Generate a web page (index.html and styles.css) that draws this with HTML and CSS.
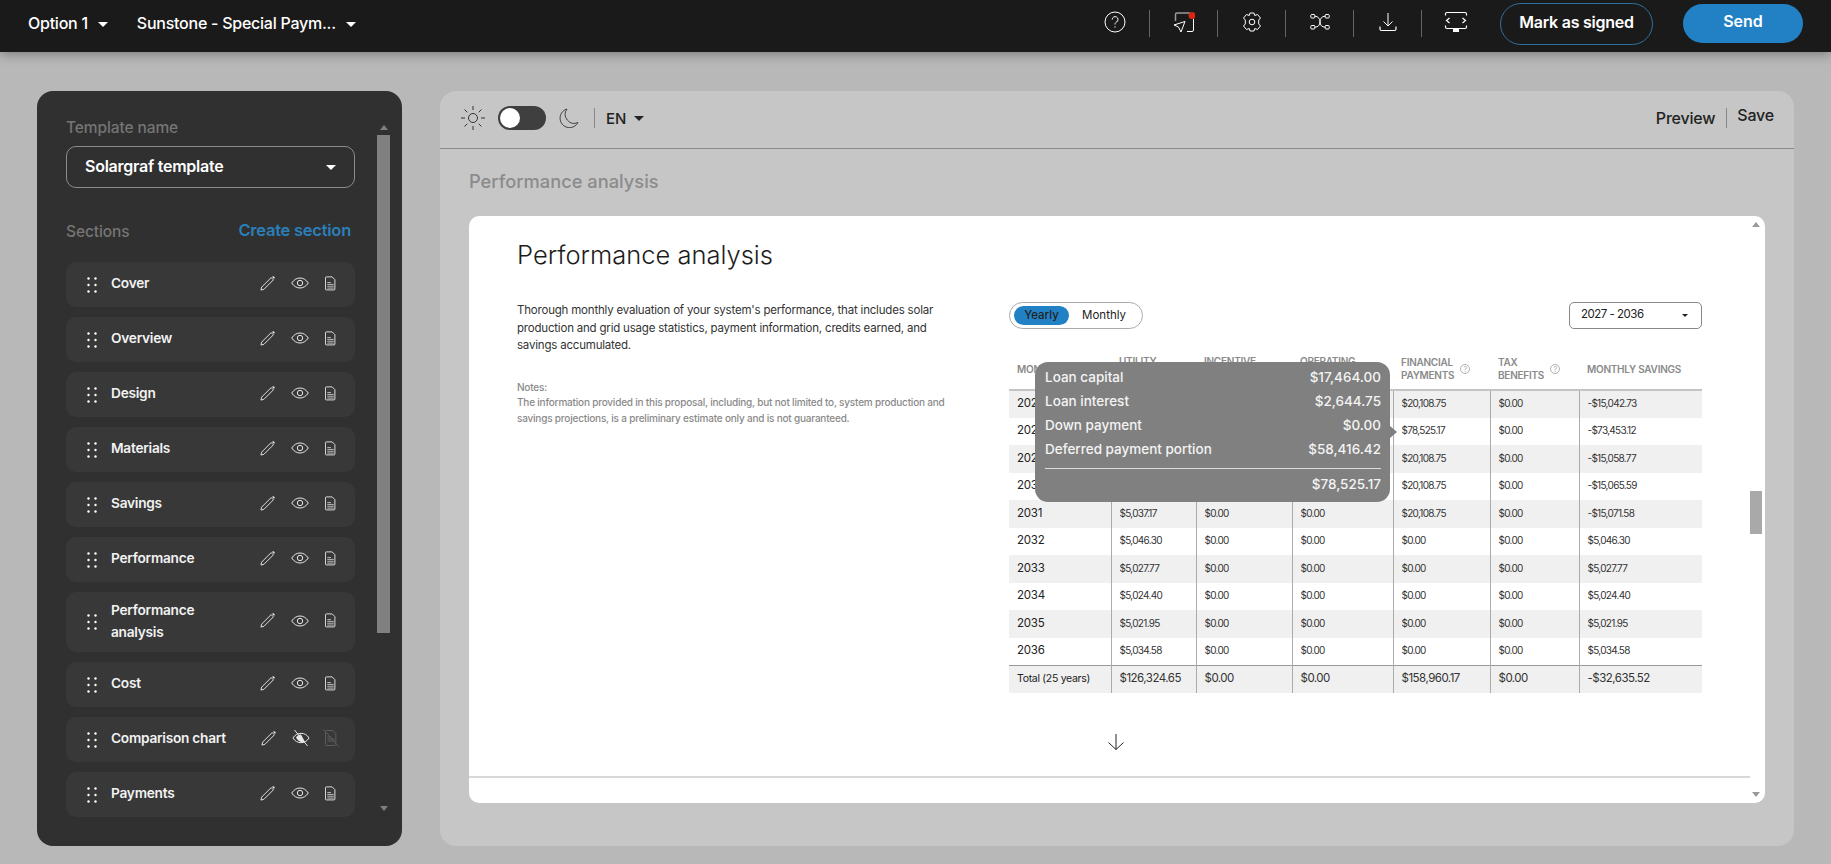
FILE: index.html
```html
<!DOCTYPE html>
<html lang="en">
<head>
  <meta charset="UTF-8">
  <title>Proposal template editor</title>
  <link rel="stylesheet" href="styles.css">
</head>
<body>

  <svg class="icon-defs" width="0" height="0">
    <symbol id="i-drag" viewBox="0 0 10 16"><g fill="#fff"><circle cx="1.5" cy="1.500" r="1.200"/><circle cx="8.5" cy="1.500" r="1.200"/><circle cx="1.5" cy="8" r="1.200"/><circle cx="8.5" cy="8" r="1.200"/><circle cx="1.5" cy="14.500" r="1.200"/><circle cx="8.5" cy="14.500" r="1.200"/></g></symbol>
    <symbol id="i-pencil" viewBox="0 0 16 16"><path d="M1 15l.8-3.200L11.900 1.700l2.400 2.400L4.200 14.200 1 15z" fill="none" stroke="currentColor"/><path d="M12.700.9l2.400 2.400 .6-1.900-1.100-1.100z" fill="currentColor"/></symbol>
    <symbol id="i-eye" viewBox="0 0 18 12"><path d="M.7 6C3 2.600 5.800 1 9 1s6 1.600 8.300 5C15 9.400 12.200 11 9 11S3 9.400.7 6z" fill="none" stroke="currentColor"/><circle cx="9" cy="6" r="2.700" fill="none" stroke="currentColor"/></symbol>
    <symbol id="i-eye-off" viewBox="0 0 18 18"><path d="M.9 9C3 5.800 5.800 4.300 9 4.300s6 1.500 8.100 4.700C15 12.200 12.200 13.700 9 13.700S3 12.200.9 9z" fill="none" stroke="currentColor"/><path d="M4 8.500c1-2 3-3 5-3l4 7.500c-3 1-6.500 0-9-4.500z" fill="currentColor"/><path d="M2.500 1l13 16" stroke="currentColor"/></symbol>
    <symbol id="i-doc" viewBox="0 0 12 16"><path d="M1.500.8h6.300l3 3v10.200a1 1 0 0 1-1 1H1.500a1 1 0 0 1-1-1V1.800a1 1 0 0 1 1-1z" fill="none" stroke="currentColor"/><path d="M2.500 7h4M2.500 9h7M2.500 11h7M2.500 13h7" stroke="currentColor" opacity=".8"/></symbol>
    <symbol id="i-doc-off" viewBox="0 0 16 18"><path d="M3.500 1.500h6.300l3 3v11a1 1 0 0 1-1 1H3.500a1 1 0 0 1-1-1v-13a1 1 0 0 1 1-1z" fill="none" stroke="currentColor"/><path d="M4.500 8h4M4.500 10h7M4.500 12h7M.5.500l15 17" stroke="currentColor"/></symbol>
  </svg>

  <header class="topbar">
    <div class="topbar-left">
      <button class="top-select">Option 1 <span class="caret"></span></button>
      <button class="top-select">Sunstone - Special Paym... <span class="caret"></span></button>
    </div>
    <div class="topbar-right">
      <div class="tool-icons">
        <span class="tool">
          <svg width="22" height="22" viewBox="0 0 22 22" fill="none" stroke="#fff"><circle cx="11" cy="11" r="10"/><path d="M8.200 8.500a2.900 2.900 0 1 1 4.400 2.500c-1 .6-1.600 1.200-1.600 2.500M11 15.300v1.300"/></svg>
        </span>
        <span class="tool">
          <svg width="22" height="22" viewBox="0 0 22 22" fill="none" stroke="#fff"><path d="M2.500 10V3.500a1.500 1.500 0 0 1 1.500-1.500h13" stroke="#9a9a9a" stroke-width="1.500"/><path d="M20.500 8v11a1.500 1.500 0 0 1-1.500 1.500h-5"/><path d="M12 10.500L1 14l4.500 2 2.500 5 4-10.500z"/><circle cx="19" cy="4.500" r="3.500" fill="#d8260f" stroke="none"/></svg>
        </span>
        <span class="tool">
          <svg width="20" height="20" viewBox="0 0 20 20" fill="none" stroke="#fff" stroke-linejoin="round"><path d="M8 1h4l.7 2.500 2.800-1 3 3.500-1.800 2v4l1.800 2-3 3.500-2.800-1L12 19H8l-.7-2.500-2.800 1-3-3.500 1.800-2V8L1.500 6l3-3.500 2.800 1L8 1z"/><circle cx="10" cy="10" r="2.800"/></svg>
        </span>
        <span class="tool">
          <svg width="20" height="18" viewBox="0 0 20 18" fill="none" stroke="#fff"><rect x=".8" y="1.500" width="4" height="3.500" rx=".8"/><rect x="15.200" y="1.500" width="4" height="3.500" rx=".8"/><rect x=".8" y="12.500" width="4" height="3.500" rx=".8"/><rect x="15.200" y="12.500" width="4" height="3.500" rx=".8"/><path d="M4.800 3.200C8 3.200 10 5.500 10 8.800S8 14.200 4.800 14.200M15.200 3.200C12 3.200 10 5.500 10 8.800s2 5.400 5.200 5.400"/></svg>
        </span>
        <span class="tool">
          <svg width="18" height="20" viewBox="0 0 18 20" fill="none" stroke="#fff"><path d="M9 1v13M4.500 9.500L9 14l4.500-4.500"/><path d="M1 14.500v2.500a1.500 1.500 0 0 0 1.500 1.500h13a1.500 1.500 0 0 0 1.500-1.500v-2.500" stroke-width="1.200"/></svg>
        </span>
        <span class="tool">
          <svg width="24" height="22" viewBox="0 0 24 22" fill="none" stroke="#fff" stroke-width="1.200"><path d="M1.500 4.500V3A1.500 1.500 0 0 1 3 1.500h18A1.500 1.500 0 0 1 22.500 3v1.500M1.500 14.500V16A1.500 1.500 0 0 0 3 17.500h18a1.500 1.500 0 0 0 1.500-1.500v-1.500M5.500 7L2.500 9.500l3 2.500M18.500 7l3 2.500-3 2.500"/><rect x="9" y="18" width="6" height="3" fill="#fff" stroke="none"/></svg>
        </span>
      </div>
      <button class="btn-outline">Mark as signed</button>
      <button class="btn-send">Send</button>
    </div>
  </header>

  <main class="workspace">

    <aside class="side-panel">
      <div class="side-content">
        <div class="side-label">Template name</div>
        <button class="template-select">Solargraf template <span class="caret"></span></button>

        <div class="sections-head">
          <span class="side-label">Sections</span>
          <a class="create-link" href="#">Create section</a>
        </div>

        <ul class="section-list">
          <li class="section-row">
            <svg class="drag" width="10" height="16"><use href="#i-drag"/></svg>
            <span class="section-name">Cover</span>
            <svg class="act" width="15" height="15"><use href="#i-pencil"/></svg>
            <svg class="act" width="18" height="12"><use href="#i-eye"/></svg>
            <svg class="act" width="11" height="15"><use href="#i-doc"/></svg>
          </li>
          <li class="section-row">
            <svg class="drag" width="10" height="16"><use href="#i-drag"/></svg>
            <span class="section-name">Overview</span>
            <svg class="act" width="15" height="15"><use href="#i-pencil"/></svg>
            <svg class="act" width="18" height="12"><use href="#i-eye"/></svg>
            <svg class="act" width="11" height="15"><use href="#i-doc"/></svg>
          </li>
          <li class="section-row">
            <svg class="drag" width="10" height="16"><use href="#i-drag"/></svg>
            <span class="section-name">Design</span>
            <svg class="act" width="15" height="15"><use href="#i-pencil"/></svg>
            <svg class="act" width="18" height="12"><use href="#i-eye"/></svg>
            <svg class="act" width="11" height="15"><use href="#i-doc"/></svg>
          </li>
          <li class="section-row">
            <svg class="drag" width="10" height="16"><use href="#i-drag"/></svg>
            <span class="section-name">Materials</span>
            <svg class="act" width="15" height="15"><use href="#i-pencil"/></svg>
            <svg class="act" width="18" height="12"><use href="#i-eye"/></svg>
            <svg class="act" width="11" height="15"><use href="#i-doc"/></svg>
          </li>
          <li class="section-row">
            <svg class="drag" width="10" height="16"><use href="#i-drag"/></svg>
            <span class="section-name">Savings</span>
            <svg class="act" width="15" height="15"><use href="#i-pencil"/></svg>
            <svg class="act" width="18" height="12"><use href="#i-eye"/></svg>
            <svg class="act" width="11" height="15"><use href="#i-doc"/></svg>
          </li>
          <li class="section-row">
            <svg class="drag" width="10" height="16"><use href="#i-drag"/></svg>
            <span class="section-name">Performance</span>
            <svg class="act" width="15" height="15"><use href="#i-pencil"/></svg>
            <svg class="act" width="18" height="12"><use href="#i-eye"/></svg>
            <svg class="act" width="11" height="15"><use href="#i-doc"/></svg>
          </li>
          <li class="section-row section-row-tall">
            <svg class="drag" width="10" height="16"><use href="#i-drag"/></svg>
            <span class="section-name">Performance analysis</span>
            <svg class="act" width="15" height="15"><use href="#i-pencil"/></svg>
            <svg class="act" width="18" height="12"><use href="#i-eye"/></svg>
            <svg class="act" width="11" height="15"><use href="#i-doc"/></svg>
          </li>
          <li class="section-row">
            <svg class="drag" width="10" height="16"><use href="#i-drag"/></svg>
            <span class="section-name">Cost</span>
            <svg class="act" width="15" height="15"><use href="#i-pencil"/></svg>
            <svg class="act" width="18" height="12"><use href="#i-eye"/></svg>
            <svg class="act" width="11" height="15"><use href="#i-doc"/></svg>
          </li>
          <li class="section-row">
            <svg class="drag" width="10" height="16"><use href="#i-drag"/></svg>
            <span class="section-name">Comparison chart</span>
            <svg class="act" width="15" height="15"><use href="#i-pencil"/></svg>
            <svg class="act" width="18" height="18"><use href="#i-eye-off"/></svg>
            <svg class="act act-off" width="16" height="18"><use href="#i-doc-off"/></svg>
          </li>
          <li class="section-row">
            <svg class="drag" width="10" height="16"><use href="#i-drag"/></svg>
            <span class="section-name">Payments</span>
            <svg class="act" width="15" height="15"><use href="#i-pencil"/></svg>
            <svg class="act" width="18" height="12"><use href="#i-eye"/></svg>
            <svg class="act" width="11" height="15"><use href="#i-doc"/></svg>
          </li>
        </ul>
      </div>
      <div class="side-scroll">
        <span class="arrow-up"></span>
        <div class="side-thumb"></div>
        <span class="arrow-down"></span>
      </div>
    </aside>

    <section class="editor">
      <div class="editor-head">
        <div class="head-left">
          <svg width="26" height="26" viewBox="0 0 26 26" fill="none" stroke="#333"><circle cx="13" cy="13" r="4.500"/><path d="M13 1v4M13 21v4M1 13h4M21 13h4M4.500 4.500l2.800 2.800M18.700 18.700l2.800 2.800M4.500 21.500l2.800-2.800M18.700 7.300l2.800-2.800"/></svg>
          <span class="mode-switch"><span class="mode-knob"></span></span>
          <svg class="moon" width="20" height="20" viewBox="0 0 20 20" fill="none" stroke="#444"><path d="M8 1A9.500 9.500 0 1 0 19 14.500 9 9 0 0 1 8 1z"/></svg>
          <span class="lang">EN <span class="caret caret-dark"></span></span>
        </div>
        <div class="head-right">
          <a class="head-link" href="#">Preview</a>
          <a class="head-link head-link-save" href="#">Save</a>
        </div>
      </div>

      <h2 class="editor-title">Performance analysis</h2>

      <div class="page-card">
        <div class="page-content">
          <h1 class="page-title">Performance analysis</h1>

          <div class="page-columns">
            <div class="intro">
              <p class="intro-text">Thorough monthly evaluation of your system's performance, that includes solar production and grid usage statistics, payment information, credits earned, and savings accumulated.</p>
              <p class="intro-notes">Notes:<br>The information provided in this proposal, including, but not limited to, system production and savings projections, is a preliminary estimate only and is not guaranteed.</p>
            </div>

            <div class="analysis">
              <div class="analysis-controls">
                <div class="period-toggle">
                  <span class="period period-on">Yearly</span>
                  <span class="period">Monthly</span>
                </div>
                <div class="year-select">2027 - 2036 <span class="caret caret-small"></span></div>
              </div>

              <div class="table-wrap">
                <table class="perf-table">
                  <colgroup>
                    <col class="c1"><col class="c2"><col class="c3"><col class="c4"><col class="c5"><col class="c6"><col class="c7">
                  </colgroup>
                  <thead>
                    <tr>
                      <th>MON</th>
                      <th class="th-under">UTILITY</th>
                      <th class="th-under">INCENTIVE</th>
                      <th class="th-under">OPERATING</th>
                      <th><span class="th-flex"><span>FINANCIAL<br>PAYMENTS</span><span class="hint">?</span></span></th>
                      <th><span class="th-flex"><span>TAX<br>BENEFITS</span><span class="hint">?</span></span></th>
                      <th>MONTHLY SAVINGS</th>
                    </tr>
                  </thead>
                  <tbody>
                    <tr><td>202</td><td></td><td></td><td></td><td>$20,108.75</td><td>$0.00</td><td>-$15,042.73</td></tr>
                    <tr><td>202</td><td></td><td></td><td></td><td>$78,525.17</td><td>$0.00</td><td>-$73,453.12</td></tr>
                    <tr><td>202</td><td></td><td></td><td></td><td>$20,108.75</td><td>$0.00</td><td>-$15,058.77</td></tr>
                    <tr><td>203</td><td></td><td></td><td></td><td>$20,108.75</td><td>$0.00</td><td>-$15,065.59</td></tr>
                    <tr><td>2031</td><td>$5,037.17</td><td>$0.00</td><td>$0.00</td><td>$20,108.75</td><td>$0.00</td><td>-$15,071.58</td></tr>
                    <tr><td>2032</td><td>$5,046.30</td><td>$0.00</td><td>$0.00</td><td>$0.00</td><td>$0.00</td><td>$5,046.30</td></tr>
                    <tr><td>2033</td><td>$5,027.77</td><td>$0.00</td><td>$0.00</td><td>$0.00</td><td>$0.00</td><td>$5,027.77</td></tr>
                    <tr><td>2034</td><td>$5,024.40</td><td>$0.00</td><td>$0.00</td><td>$0.00</td><td>$0.00</td><td>$5,024.40</td></tr>
                    <tr><td>2035</td><td>$5,021.95</td><td>$0.00</td><td>$0.00</td><td>$0.00</td><td>$0.00</td><td>$5,021.95</td></tr>
                    <tr><td>2036</td><td>$5,034.58</td><td>$0.00</td><td>$0.00</td><td>$0.00</td><td>$0.00</td><td>$5,034.58</td></tr>
                    <tr class="total-row"><td>Total (25 years)</td><td>$126,324.65</td><td>$0.00</td><td>$0.00</td><td>$158,960.17</td><td>$0.00</td><td>-$32,635.52</td></tr>
                  </tbody>
                </table>

                <div class="tip">
                  <div class="tip-row"><span>Loan capital</span><span>$17,464.00</span></div>
                  <div class="tip-row"><span>Loan interest</span><span>$2,644.75</span></div>
                  <div class="tip-row"><span>Down payment</span><span>$0.00</span></div>
                  <div class="tip-row"><span>Deferred payment portion</span><span>$58,416.42</span></div>
                  <div class="tip-total">$78,525.17</div>
                </div>
              </div>
            </div>
          </div>

          <div class="next-arrow">
            <svg width="18" height="18" viewBox="0 0 18 18" fill="none" stroke="#222"><path d="M9 1v15.500M1.500 9.500L9 16.500l7.500-7"/></svg>
          </div>
          <div class="page-divider"></div>
        </div>

        <div class="card-scroll">
          <span class="arrow-up arrow-light"></span>
          <div class="card-thumb"></div>
          <span class="arrow-down arrow-light"></span>
        </div>
      </div>
    </section>
  </main>

</body>
</html>
```

FILE: styles.css
```css
* {
  box-sizing: border-box;
}

body {
  margin: 0;
  height: 864px;
  overflow: hidden;
  display: flex;
  flex-direction: column;
  background-color: #b8b8b8;
  font-family: 'Inter', 'Liberation Sans', sans-serif;
  color: #1a1a1a;
}

button {
  font-family: inherit;
  border: none;
  background: none;
  cursor: pointer;
}

a {
  text-decoration: none;
}

.icon-defs {
  position: absolute;
}

.caret {
  display: inline-block;
  width: 0;
  height: 0;
  border-left: 5px solid transparent;
  border-right: 5px solid transparent;
  border-top: 5px solid #fff;
  vertical-align: middle;
}

.caret-dark {
  border-top-color: #222;
  margin-left: 8px;
}

.caret-small {
  border-left-width: 3px;
  border-right-width: 3px;
  border-top: 3px solid #222;
  margin-top: 4px;
}

/* Top bar */
.topbar {
  height: 52px;
  flex: none;
  display: flex;
  justify-content: space-between;
  align-items: center;
  padding: 0 28px;
  background-color: #1a1a1a;
  box-shadow: 0 3px 10px rgba(0, 0, 0, 0.3);
}

.topbar-left {
  display: flex;
  gap: 29px;
  margin-top: -6px;
}

.top-select {
  padding: 0;
  color: #fff;
  font-size: 16px;
  font-weight: 500;
  letter-spacing: -0.25px;
}

.top-select .caret {
  margin-left: 6px;
}

.topbar-right {
  display: flex;
  align-items: center;
}

.tool-icons {
  display: flex;
  align-items: center;
  margin-right: 11px;
  margin-top: -5px;
}

.tool {
  width: 68px;
  height: 27px;
  display: flex;
  align-items: center;
  justify-content: center;
  border-left: 1px solid #666;
}

.tool svg {
  margin-top: -3px;
}

.tool:first-child {
  border-left: none;
}

.btn-outline {
  width: 153px;
  height: 42px;
  margin-top: -5px;
  padding-bottom: 4px;
  border: 1px solid #2d6f9b;
  border-radius: 21px;
  color: #fff;
  font-size: 16px;
  font-weight: 600;
  letter-spacing: -0.25px;
}

.btn-send {
  width: 120px;
  height: 39px;
  margin-left: 30px;
  margin-top: -5px;
  padding-bottom: 6px;
  border-radius: 20px;
  background-color: #2281c4;
  color: #fff;
  font-size: 16px;
  font-weight: 600;
}

/* Workspace */
.workspace {
  flex: 1;
  min-height: 0;
  display: flex;
  gap: 38px;
  padding: 39px 37px 18px;
}

.side-panel {
  width: 365px;
  flex: none;
  display: flex;
  gap: 22px;
  padding: 28px 12px 28px 29px;
  background-color: #303030;
  border-radius: 16px;
}

.side-content {
  width: 289px;
  flex: none;
}

.side-label {
  font-size: 15.5px;
  line-height: 18px;
  color: #757575;
  font-weight: 500;
  letter-spacing: -0.1px;
}

.template-select {
  width: 100%;
  height: 42px;
  margin-top: 9px;
  padding: 0 18px 3px;
  display: flex;
  align-items: center;
  justify-content: space-between;
  border: 1px solid #8c8c8c;
  border-radius: 10px;
  color: #fff;
  font-size: 16px;
  font-weight: 600;
  letter-spacing: -0.25px;
}

.template-select .caret {
  margin-top: 3px;
}

.sections-head {
  display: flex;
  justify-content: space-between;
  align-items: center;
  height: 20px;
  margin-top: 34px;
  padding-right: 4px;
}

.create-link {
  font-size: 16.5px;
  font-weight: 600;
  color: #2b7fb8;
  margin-top: -5px;
  letter-spacing: -0.25px;
}

.section-list {
  list-style: none;
  margin: 20px 0 0;
  padding: 0;
  display: flex;
  flex-direction: column;
  gap: 10px;
}

.section-row {
  height: 45px;
  display: flex;
  align-items: center;
  padding: 0 19px 0 21px;
  background-color: #383838;
  border-radius: 10px;
  color: #e8e8e8;
}

.section-row-tall {
  height: 60px;
}

.drag {
  flex: none;
  margin-right: 14px;
}

.section-name {
  width: 128px;
  margin-right: auto;
  padding-bottom: 3px;
  font-size: 13.7px;
  font-weight: 600;
  line-height: 22px;
  color: #f2f2f2;
  letter-spacing: -0.25px;
}

.act {
  flex: none;
  margin-left: 16px;
  margin-top: -3px;
}

.act-off {
  color: #5c5c5c;
  margin-left: 13px;
  margin-right: -3px;
}

.side-scroll {
  width: 13px;
  flex: none;
  margin: 6px 0 7px;
  display: flex;
  flex-direction: column;
  align-items: center;
}

.side-thumb {
  width: 13px;
  height: 498px;
  margin-top: 5px;
  background-color: #808080;
}

.arrow-up,
.arrow-down {
  width: 0;
  height: 0;
  border-left: 4px solid transparent;
  border-right: 4px solid transparent;
}

.arrow-up {
  border-bottom: 5px solid #808080;
}

.arrow-down {
  margin-top: auto;
  border-top: 5px solid #808080;
}

/* Editor */
.editor {
  flex: 1;
  min-width: 0;
  background-color: #c6c6c6;
  border-radius: 16px;
  display: flex;
  flex-direction: column;
}

.editor-head {
  height: 58px;
  flex: none;
  display: flex;
  justify-content: space-between;
  align-items: center;
  padding: 0 20px 3px 20px;
  border-bottom: 1px solid #8a8a8a;
}

.head-left {
  display: flex;
  align-items: center;
  gap: 12px;
}

.mode-switch {
  width: 48px;
  height: 24px;
  padding: 2px;
  display: flex;
  background-color: #3f3f3f;
  border-radius: 12px;
}

.mode-knob {
  width: 20px;
  height: 20px;
  background-color: #fff;
  border-radius: 50%;
}

.moon {
  margin-left: 1px;
}

.lang {
  display: flex;
  align-items: center;
  margin-left: 3px;
  padding-left: 11px;
  height: 20px;
  border-left: 1px solid #888;
  font-size: 15px;
  font-weight: 500;
  color: #222;
}

.head-right {
  display: flex;
  align-items: center;
}

.head-link {
  font-size: 16px;
  font-weight: 500;
  letter-spacing: -0.2px;
  color: #222;
  padding-right: 11px;
  border-right: 1px solid #888;
  line-height: 20px;
}

.head-link-save {
  padding: 0 0 6px 10px;
  border-right: none;
}

.editor-title {
  margin: 22px 0 0 29px;
  font-size: 18.3px;
  line-height: 20px;
  font-weight: 500;
  color: #8b8b8b;
}

.page-card {
  margin: 25px 29px 0;
  height: 587px;
  display: flex;
  padding-right: 2px;
  background-color: #fff;
  border-radius: 10px;
  overflow: hidden;
}

.page-content {
  width: 1281px;
  flex: none;
}

.card-scroll {
  width: 12px;
  flex: none;
  padding: 6px 0;
  display: flex;
  flex-direction: column;
  align-items: center;
}

.arrow-light {
  border-bottom-color: #9a9a9a;
  border-top-color: #9a9a9a;
}

.card-thumb {
  width: 12px;
  height: 43px;
  margin-top: 264px;
  background-color: #a9a9a9;
}

.page-title {
  margin: 23px 0 0 48px;
  font-size: 25.5px;
  line-height: 32px;
  font-weight: 300;
  color: #1c1c1c;
}

.page-columns {
  display: flex;
  margin-top: 31px;
  padding-left: 48px;
  gap: 58px;
}

.intro {
  width: 434px;
  flex: none;
}

.intro-text {
  margin: 0;
  padding-right: 12px;
  font-size: 11.5px;
  line-height: 17.5px;
  letter-spacing: -0.2px;
  color: #333;
}

.intro-notes {
  margin: 25px 0 0;
  font-size: 10px;
  line-height: 15.5px;
  font-weight: 500;
  letter-spacing: -0.2px;
  color: #8a8a8a;
}

.analysis {
  width: 693px;
  flex: none;
}

.analysis-controls {
  display: flex;
  justify-content: space-between;
  height: 27px;
}

.period-toggle {
  width: 134px;
  display: flex;
  align-items: center;
  padding: 0 4px;
  border: 1px solid #aaa;
  border-radius: 14px;
}

.period {
  padding: 0 12px;
  line-height: 19px;
  font-size: 11.5px;
  color: #222;
}

.period-on {
  width: 57px;
  padding: 0;
  text-align: center;
  background-color: #2281c4;
  border-radius: 10px;
  margin-right: 1px;
  font-weight: 500;
}

.year-select {
  width: 133px;
  display: flex;
  align-items: center;
  justify-content: space-between;
  padding: 0 13px 4px 11px;
  border: 1px solid #888;
  border-radius: 5px;
  font-size: 11.5px;
  letter-spacing: -0.5px;
  color: #222;
}

.table-wrap {
  position: relative;
  margin-top: 23px;
}

.perf-table {
  width: 693px;
  table-layout: fixed;
  border-collapse: collapse;
}

.c1 { width: 102px; }
.c2 { width: 85px; }
.c3 { width: 96px; }
.c4 { width: 101px; }
.c5 { width: 97px; }
.c6 { width: 89px; }
.c7 { width: 123px; }

.perf-table th {
  height: 38px;
  padding: 0 0 3px 8px;
  text-align: left;
  vertical-align: middle;
  font-size: 10px;
  line-height: 13px;
  font-weight: 600;
  letter-spacing: -0.25px;
  color: #8a8a8a;
  border-bottom: 2px solid #c4c4c4;
}

.perf-table .th-under {
  vertical-align: top;
  padding-top: 3px;
}

.th-flex {
  display: flex;
  align-items: center;
  gap: 6px;
}

.hint {
  width: 10px;
  height: 10px;
  display: flex;
  align-items: center;
  justify-content: center;
  border: 1px solid #b0b0b0;
  border-radius: 50%;
  font-size: 7px;
  font-weight: 400;
  color: #aaa;
}

.perf-table td {
  height: 27.5px;
  padding: 0 0 2px 8px;
  font-size: 10px;
  letter-spacing: -0.7px;
  color: #333;
  white-space: nowrap;
  border-left: 1px solid #ababab;
}

.perf-table td:first-child {
  font-size: 11.5px;
  letter-spacing: -0.2px;
  color: #222;
  border-left: none;
}

.perf-table tbody tr:nth-child(odd) {
  background-color: #f0f0f0;
}

.perf-table .total-row td {
  font-size: 11.5px;
  letter-spacing: -0.5px;
  border-top: 1px solid #999;
}

.perf-table .total-row td:first-child {
  font-size: 10.5px;
  letter-spacing: -0.3px;
}

.tip {
  position: absolute;
  left: 26px;
  top: 10px;
  width: 355px;
  height: 140px;
  padding: 3px 9px 0 10px;
  background-color: #808080;
  border-radius: 13px;
  color: #f4f4f4;
  font-size: 13.5px;
  font-weight: 500;
}

.tip::after {
  content: '';
  position: absolute;
  right: -7px;
  top: 64px;
  border-top: 6px solid transparent;
  border-bottom: 6px solid transparent;
  border-left: 7px solid #808080;
}

.tip-row {
  display: flex;
  justify-content: space-between;
  line-height: 24px;
}

.tip-total {
  margin-top: 7px;
  padding-top: 3px;
  text-align: right;
  line-height: 24px;
  border-top: 1px solid #ddd;
}

.next-arrow {
  margin-top: 40px;
  padding-left: 13px;
  text-align: center;
  line-height: 0;
}

.page-divider {
  height: 2px;
  margin-top: 25px;
  background-color: #d8d8d8;
}
```
